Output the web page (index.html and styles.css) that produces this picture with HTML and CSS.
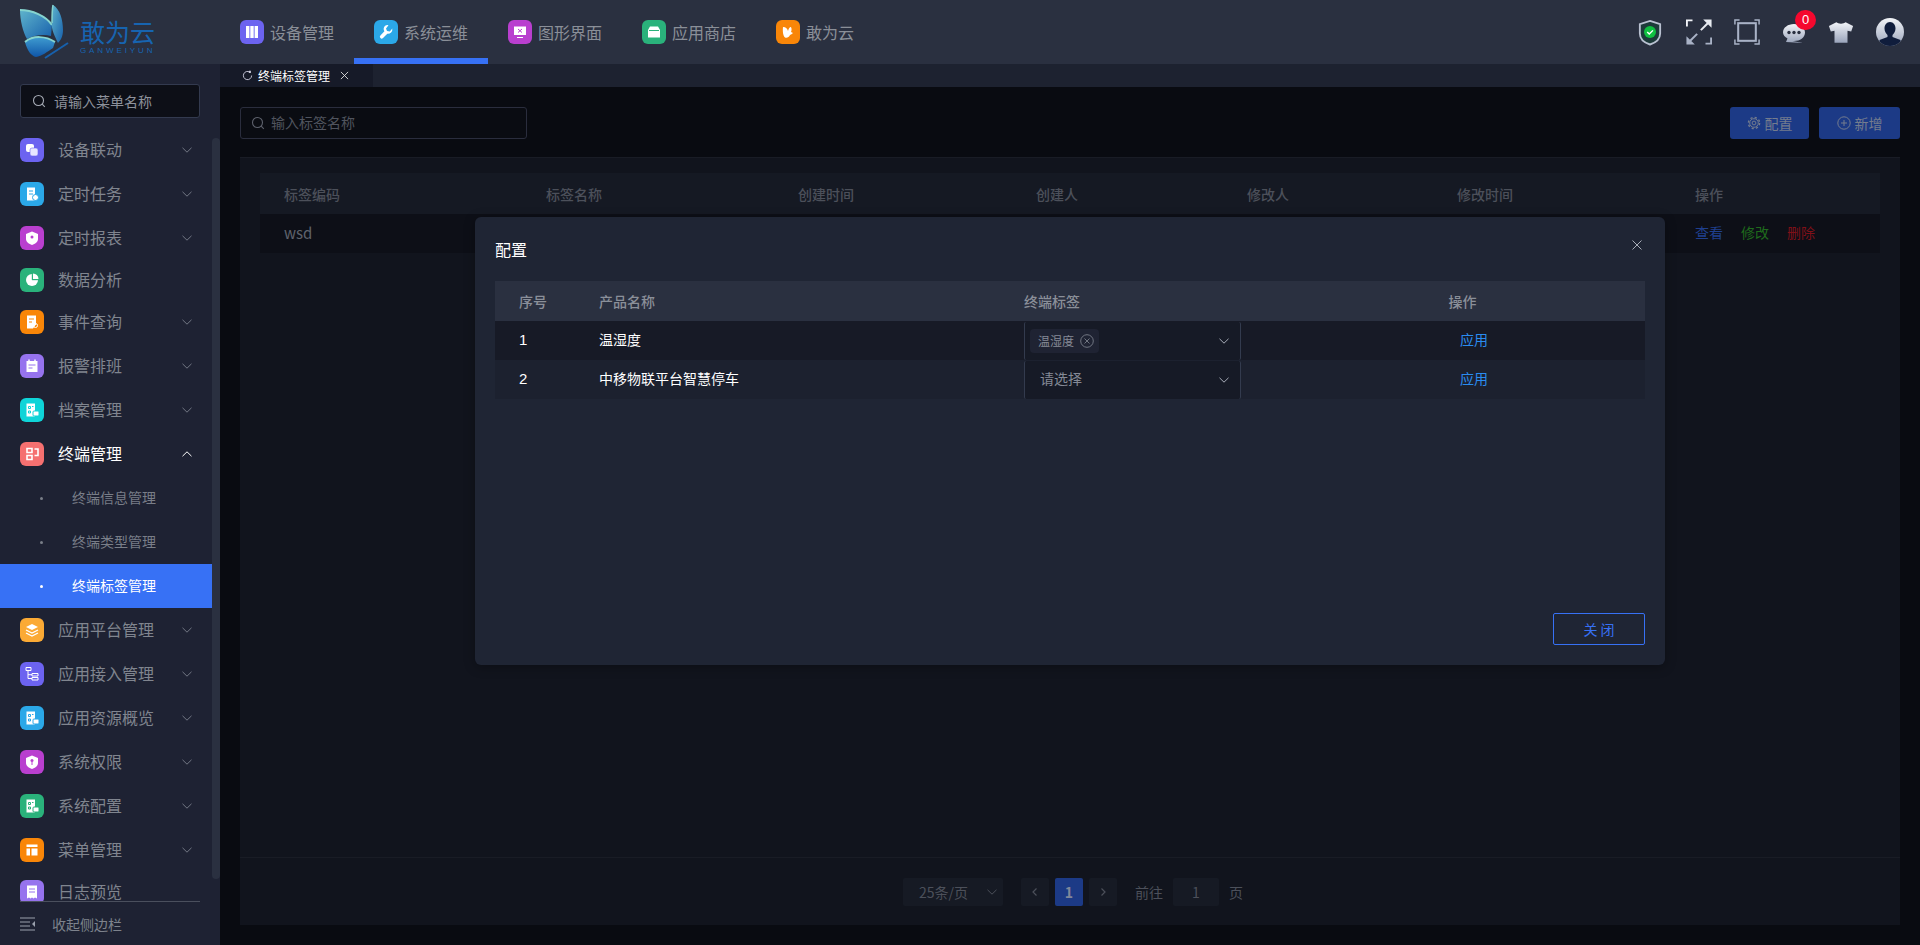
FILE: index.html
```html
<!DOCTYPE html>
<html lang="zh-CN">
<head>
<meta charset="utf-8">
<title>终端标签管理</title>
<link rel="stylesheet" href="styles.css">
</head>
<body>
<svg class="defs" width="0" height="0" aria-hidden="true">
  <defs>
    <symbol id="chev" viewBox="0 0 12 12"><path d="M1.500 3.800 6 8.200l4.500-4.400" fill="none" stroke="currentColor" stroke-width="1"/></symbol>
    <symbol id="search" viewBox="0 0 14 14"><circle cx="6.500" cy="6.500" r="5" fill="none" stroke="currentColor" stroke-width="1.100"/><path d="m10.200 10.200 2.600 2.600" stroke="currentColor" stroke-width="1.100"/></symbol>
    <linearGradient id="metal" x1="0" y1="0" x2="0" y2="1"><stop offset="0" stop-color="#f2f4f8"/><stop offset="1" stop-color="#9aa4bb"/></linearGradient>
    <linearGradient id="wing" x1="0" y1="0" x2="1" y2="1"><stop offset="0" stop-color="#5fb4cc"/><stop offset="1" stop-color="#1760ac"/></linearGradient>
    <linearGradient id="wing2" x1="0" y1="0" x2="0" y2="1"><stop offset="0" stop-color="#3f9bd0"/><stop offset="1" stop-color="#0f56a8"/></linearGradient>
  </defs>
</svg>
<header class="topbar">
  <div class="logo">
    <svg class="logo-mark" viewBox="20 2 52 60" width="52" height="60">
      <path d="M20 10C32 10 46 16 52 25L51 36C44 34 34 35 27 39 23 32 20 20 20 10z" fill="url(#wing)"/>
      <path d="M20 10C32 10 46 16 52 25" fill="none" stroke="#86d4cf" stroke-width="2"/>
      <path d="M53 5C60 9 63 20 63 30 63 36 61 40 58 43 55 36 51 30 52 23 52 16 52 10 53 5z" fill="url(#wing)"/>
      <path d="M53 5C52 10 52 16 52 23" fill="none" stroke="#86d4cf" stroke-width="1.500"/>
      <path d="M25 42C33 35 46 36 55 42L53 48C47 52 42 56 36 57 31 56 27 50 25 42z" fill="url(#wing2)"/>
      <path d="M25 42C33 35 46 36 55 42" fill="none" stroke="#86d4cf" stroke-width="2"/>
      <path d="M45 58 68 43" stroke="#1760ac" stroke-width="2" fill="none"/>
    </svg>
    <div class="logo-text"><span class="logo-cn">敢为云</span><span class="logo-en">GANWEIYUN</span></div>
  </div>
  <nav class="topnav">
    <a class="topnav-item"><span class="ico ico-top c-indigo"><svg viewBox="0 0 16 16"><path d="M2 2h3.400v12H2zM6.300 2h3.400v12H6.300zM10.600 2H14v12h-3.400z" fill="#fff"/></svg></span>设备管理</a>
    <a class="topnav-item active"><span class="ico ico-top c-sky"><svg viewBox="0 0 16 16"><path d="M7.500 1.500a4.500 4.500 0 0 1 3-.2L8 4.500l1 2.500 2.800.6 2.500-3a4.500 4.500 0 0 1-5 5.200L5 14a1.800 1.800 0 0 1-2.600-2.500l4-4.200a4.500 4.500 0 0 1 1.100-5.800z" fill="#fff"/></svg></span>系统运维</a>
    <a class="topnav-item"><span class="ico ico-top c-purple"><svg viewBox="0 0 16 16"><path d="M2 2.500h12v8.500H2z" fill="#fff"/><path d="M5 13h6v1H5z" fill="#fff"/><path d="M6 5l4 3.500M10 5 6 8.500" stroke="#b93fcf"/></svg></span>图形界面</a>
    <a class="topnav-item"><span class="ico ico-top c-green"><svg viewBox="0 0 16 16"><path d="M4 2.500h8L14 6v7.500H2V6z" fill="#fff"/><path d="M3 6.500h10" stroke="#2ab27b"/></svg></span>应用商店</a>
    <a class="topnav-item"><span class="ico ico-top c-orange"><svg viewBox="0 0 16 16"><path d="M3 3c3 0 4.500 2 5 4 .5-2 1.500-4 3-4 1 2 .5 4 0 5l2 1c-1 1-2 1.500-3 2-1 2.500-3 3-5 2.500C3 12 2.500 7 3 3z" fill="#fff"/></svg></span>敢为云</a>
  </nav>
  <div class="tools">
    <svg class="tool tool-shield" viewBox="0 0 26 28" width="24" height="27"><path d="M13 1.500 24 5v10c0 6-5 10-11 12C7 25 2 21 2 15V5z" fill="#1d3a3a" stroke="#b9c1d1" stroke-width="2"/><circle cx="13" cy="13.500" r="6.500" fill="#0fc040"/><path d="m10 13.500 2.200 2.200 4-4" fill="none" stroke="#fff" stroke-width="1.500"/></svg>
    <svg class="tool" viewBox="0 0 28 28" width="26" height="26"><path d="M1 8V1.500h6" fill="none" stroke="#f2f4f8" stroke-width="2"/><path d="M27 20v6.500h-6" fill="none" stroke="#a9b2c6" stroke-width="2"/><path d="M16 12 24 4" stroke="#e8ebf1" stroke-width="2.200"/><path d="M27.500.5v9l-9-9z" fill="#e8ebf1"/><path d="M12 16 4 24" stroke="#a9b2c6" stroke-width="2.200"/><path d="M.5 27.500v-9l9 9z" fill="#a9b2c6"/></svg>
    <svg class="tool" viewBox="0 0 28 28" width="26" height="26"><g fill="none" stroke="#a9b2c6"><rect x="4.500" y="4.500" width="19" height="19" stroke-width="2.200"/><path d="M1 6V1h5M22 1h5v5M1 22v5h5M22 27h5v-5" stroke-width="1.600"/></g></svg>
    <span class="chat">
      <svg viewBox="0 0 24 24" width="24" height="24"><path d="M12 3c6 0 11 3.500 11 8.500S18 20 12 20c-1 0-2 0-3-.3L21 22 4 21l1.500-3.500C3 16 1 14 1 11.500 1 6.500 6 3 12 3z" fill="url(#metal)"/><circle cx="7" cy="11.500" r="1.700" fill="#2a3040"/><circle cx="12" cy="11.500" r="1.700" fill="#2a3040"/><circle cx="17" cy="11.500" r="1.700" fill="#2a3040"/></svg>
      <b class="badge">0</b>
    </span>
    <svg class="tool" viewBox="0 0 28 24" width="26" height="23"><path d="M9 1c2 2 8 2 10 0l8 4-2 6-4-1v13H7V10l-4 1-2-6z" fill="url(#metal)"/></svg>
    <svg class="tool avatar" viewBox="0 0 28 28" width="28" height="28"><defs><clipPath id="av"><circle cx="14" cy="14" r="14"/></clipPath></defs><g clip-path="url(#av)"><rect width="28" height="28" fill="url(#metal)"/><path d="M14 4c3.500 0 5.500 3 5.500 6.500 0 3-1.500 5-3 6.500v2l8 3v6H3.500v-6l8-3v-2c-1.500-1.500-3-3.500-3-6.500C8.500 7 10.500 4 14 4z" fill="#101d3c"/></g></svg>
  </div>
</header>

<div class="body">
  <aside class="sidebar">
    <div class="side-search"><svg class="s-ico"><use href="#search"/></svg><span>请输入菜单名称</span></div>
    <div class="side-scroll">
      <ul class="menu">
        <li class="menu-item"><span class="ico c-indigo"><svg viewBox="0 0 16 16"><rect x="2" y="2" width="8" height="8" rx="2" fill="#fff"/><rect x="6" y="6" width="8" height="8" rx="2" fill="#e8e6ff" stroke="#6c63f0" stroke-width=".6"/></svg></span><span class="label">设备联动</span><svg class="chev"><use href="#chev"/></svg></li>
        <li class="menu-item"><span class="ico c-sky"><svg viewBox="0 0 16 16"><path d="M3 1.500h8v13H3z" fill="#fff"/><path d="M5 5h4M5 8h4" stroke="#2ba8e8"/><circle cx="11.500" cy="11.500" r="3" fill="#fff" stroke="#2ba8e8"/></svg></span><span class="label">定时任务</span><svg class="chev"><use href="#chev"/></svg></li>
        <li class="menu-item"><span class="ico c-purple"><svg viewBox="0 0 16 16"><path d="M8 1.500 14 4v5c0 3-3 5-6 6-3-1-6-3-6-6V4z" fill="#fff"/><circle cx="8" cy="7" r="1.500" fill="#b93fcf"/></svg></span><span class="label">定时报表</span><svg class="chev"><use href="#chev"/></svg></li>
        <li class="menu-item short"><span class="ico c-green"><svg viewBox="0 0 16 16"><circle cx="8" cy="8" r="6" fill="#fff"/><path d="M8 2v6h6A6 6 0 0 0 8 2z" fill="#2ab27b" stroke="#2ab27b" stroke-width=".4"/><path d="M9 1.500A5.500 5.500 0 0 1 14.500 7H9z" fill="#fff"/></svg></span><span class="label">数据分析</span></li>
        <li class="menu-item"><span class="ico c-orange"><svg viewBox="0 0 16 16"><path d="M3 1.500h9v9l-3 4H3z" fill="#fff"/><path d="M5 5h5M5 8h3" stroke="#f98608"/><circle cx="11.500" cy="11.500" r="2" fill="none" stroke="#fff"/></svg></span><span class="label">事件查询</span><svg class="chev"><use href="#chev"/></svg></li>
        <li class="menu-item"><span class="ico c-violet"><svg viewBox="0 0 16 16"><path d="M2.500 3h11v11h-11z" fill="#fff"/><path d="M5 1.500v3M11 1.500v3" stroke="#fff" stroke-width="1.500"/><path d="M4.500 7h7M4.500 10h4" stroke="#9673ee"/></svg></span><span class="label">报警排班</span><svg class="chev"><use href="#chev"/></svg></li>
        <li class="menu-item"><span class="ico c-cyan"><svg viewBox="0 0 16 16"><path d="M2.500 1.500h8.500v13H2.500z" fill="#fff"/><path d="M4.500 4.500h2v2h-2zM8 4.500h1.500M4.500 9h2v2h-2z" stroke="#0fd4d8" fill="none"/><rect x="9" y="9" width="6" height="5" rx="1" fill="#fff" stroke="#0fd4d8"/></svg></span><span class="label">档案管理</span><svg class="chev"><use href="#chev"/></svg></li>
        <li class="menu-item open"><span class="ico c-coral"><svg viewBox="0 0 16 16"><path d="M3 2.500h5v4H3zM3 9.500h5v4H3z" fill="none" stroke="#fff" stroke-width="1.600"/><path d="M10.500 3H14v6.500h-3.500" fill="none" stroke="#fff" stroke-width="1.600"/></svg></span><span class="label">终端管理</span><svg class="chev up"><use href="#chev"/></svg></li>
        <li class="sub-item"><i class="dot"></i><span class="sub-label">终端信息管理</span></li>
        <li class="sub-item"><i class="dot"></i><span class="sub-label">终端类型管理</span></li>
        <li class="sub-item current"><i class="dot"></i><span class="sub-label">终端标签管理</span></li>
        <li class="menu-item"><span class="ico c-amber"><svg viewBox="0 0 16 16"><path d="M8 2 14 5 8 8 2 5z" fill="#fff"/><path d="M2 8l6 3 6-3M2 11l6 3 6-3" fill="none" stroke="#fff" stroke-width="1.300"/></svg></span><span class="label">应用平台管理</span><svg class="chev"><use href="#chev"/></svg></li>
        <li class="menu-item"><span class="ico c-indigo"><svg viewBox="0 0 16 16"><path d="M2 1.500h5v3H2zM8 7.500h6V10H8zM8 11.500h6V14H8z" fill="none" stroke="#fff"/><path d="M4 4.500v8h4M4 8.700h4" fill="none" stroke="#fff"/></svg></span><span class="label">应用接入管理</span><svg class="chev"><use href="#chev"/></svg></li>
        <li class="menu-item"><span class="ico c-sky"><svg viewBox="0 0 16 16"><path d="M2.500 1.500h8.500v13H2.500z" fill="#fff"/><path d="M4.500 4.500h2v2h-2zM8 4.500h1.500M4.500 9h2v2h-2z" stroke="#2ba8e8" fill="none"/><rect x="9" y="9" width="6" height="5" rx="1" fill="#fff" stroke="#2ba8e8"/></svg></span><span class="label">应用资源概览</span><svg class="chev"><use href="#chev"/></svg></li>
        <li class="menu-item"><span class="ico c-purple"><svg viewBox="0 0 16 16"><path d="M8 1.500 14 4v5c0 3-3 5-6 6-3-1-6-3-6-6V4z" fill="#fff"/><circle cx="8" cy="6.500" r="1.500" fill="#b93fcf"/><path d="M8 8v3" stroke="#b93fcf"/></svg></span><span class="label">系统权限</span><svg class="chev"><use href="#chev"/></svg></li>
        <li class="menu-item"><span class="ico c-green"><svg viewBox="0 0 16 16"><path d="M2.500 1.500h8.500v13H2.500z" fill="#fff"/><path d="M4.500 4.500h2v2h-2zM8 4.500h1.500M4.500 9h2v2h-2z" stroke="#2ab27b" fill="none"/><rect x="9" y="9" width="6" height="5" rx="1" fill="#fff" stroke="#2ab27b"/></svg></span><span class="label">系统配置</span><svg class="chev"><use href="#chev"/></svg></li>
        <li class="menu-item"><span class="ico c-orange"><svg viewBox="0 0 16 16"><path d="M2.500 2.500h11V5h-11zM2.500 6.500h3.500v7h-3.500zM7.500 6.500h6v7h-6z" fill="#fff"/></svg></span><span class="label">菜单管理</span><svg class="chev"><use href="#chev"/></svg></li>
        <li class="menu-item short"><span class="ico c-violet"><svg viewBox="0 0 16 16"><path d="M3 1.500h10v13l-2-1-1.500 1-1.500-1-1.500 1-1.500-1-2 1z" fill="#fff"/><path d="M5 5h6M5 8h6" stroke="#9673ee"/></svg></span><span class="label">日志预览</span></li>
      </ul>
      <div class="scrollbar"></div>
    </div>
    <div class="side-foot">
      <svg class="collapse" viewBox="0 0 16 14" width="16" height="14"><path d="M0 1h15M0 5h10M0 9h10M0 13h15" stroke="#9aa0ad" stroke-width="1"/><path d="M15 4v6l-3-3z" fill="#9aa0ad"/></svg>
      <span>收起侧边栏</span>
    </div>
  </aside>

  <main class="main">
    <div class="tabs">
      <div class="tab">
        <svg class="tab-ico" viewBox="0 0 12 12" width="11" height="11"><path d="M10.500 6A4.500 4.500 0 1 1 8.500 2.300" fill="none" stroke="currentColor"/><path d="M7.700.8h2v2.400h-2.300z" fill="currentColor"/></svg>
        <span>终端标签管理</span>
        <svg class="tab-close" viewBox="0 0 10 10" width="9" height="9"><path d="M1 1l8 8M9 1 1 9" stroke="currentColor"/></svg>
      </div>
    </div>
    <div class="page">
      <div class="toolbar">
        <div class="search-box"><svg class="s-ico"><use href="#search"/></svg><span>输入标签名称</span></div>
        <div class="btns">
          <button class="btn"><svg viewBox="0 0 14 14" width="14" height="14"><circle cx="7" cy="7" r="1.900" fill="none" stroke="currentColor"/><circle cx="7" cy="7" r="4.300" fill="none" stroke="currentColor"/><circle cx="7" cy="7" r="5.600" fill="none" stroke="currentColor" stroke-width="1.400" stroke-dasharray="2.200 2.200"/></svg>配置</button>
          <button class="btn wide"><svg viewBox="0 0 14 14" width="14" height="14"><circle cx="7" cy="7" r="6.200" fill="none" stroke="currentColor"/><path d="M4 7h6M7 4v6" stroke="currentColor"/></svg>新增</button>
        </div>
      </div>
      <div class="panel">
        <table class="list">
          <colgroup><col class="w1"><col class="w2"><col class="w3"><col class="w4"><col class="w5"><col class="w6"><col></colgroup>
          <thead><tr><th>标签编码</th><th>标签名称</th><th>创建时间</th><th>创建人</th><th>修改人</th><th>修改时间</th><th>操作</th></tr></thead>
          <tbody><tr><td>wsd</td><td></td><td></td><td></td><td></td><td></td><td class="ops"><a class="op-blue">查看</a><a class="op-green">修改</a><a class="op-red">删除</a></td></tr></tbody>
        </table>
        <div class="pager">
          <span class="pg pg-size">25条/页<svg class="chev"><use href="#chev"/></svg></span>
          <span class="pg pg-btn"><svg viewBox="0 0 10 10" width="10" height="10"><path d="M6.500 1.500 3 5l3.500 3.500" fill="none" stroke="currentColor" stroke-width="1.200"/></svg></span>
          <span class="pg pg-cur">1</span>
          <span class="pg pg-btn"><svg viewBox="0 0 10 10" width="10" height="10"><path d="M3.500 1.500 7 5 3.500 8.500" fill="none" stroke="currentColor" stroke-width="1.200"/></svg></span>
          <span class="pg-txt pg-go">前往</span>
          <span class="pg pg-input">1</span>
          <span class="pg-txt">页</span>
        </div>
      </div>
    </div>
  </main>
</div>

<section class="dialog">
  <div class="dlg-head"><h2>配置</h2><svg class="dlg-x" viewBox="0 0 10 10" width="10" height="10"><path d="M.5.500l9 9M9.500.500l-9 9" stroke="#a8adb8"/></svg></div>
  <table class="cfg">
    <colgroup><col class="c1"><col class="c2"><col class="c3"><col class="c4"></colgroup>
    <thead><tr><th>序号</th><th>产品名称</th><th class="th-sel">终端标签</th><th class="th-op">操作</th></tr></thead>
    <tbody>
      <tr><td>1</td><td class="name">温湿度</td><td class="cell-sel"><div class="select"><span class="tag">温湿度<svg viewBox="0 0 14 14" width="14" height="14"><circle cx="7" cy="7" r="6.300" fill="none" stroke="currentColor" stroke-width=".8"/><path d="m4.500 4.500 5 5M9.500 4.500l-5 5" stroke="currentColor" stroke-width=".8"/></svg></span><svg class="chev"><use href="#chev"/></svg></div></td><td class="td-op"><a class="apply">应用</a></td></tr>
      <tr><td>2</td><td class="name">中移物联平台智慧停车</td><td class="cell-sel"><div class="select"><span class="ph">请选择</span><svg class="chev"><use href="#chev"/></svg></div></td><td class="td-op"><a class="apply">应用</a></td></tr>
    </tbody>
  </table>
  <div class="dlg-foot"><button class="close-btn">关 闭</button></div>
</section>
</body>
</html>
```
FILE: styles.css
```css
* { box-sizing: border-box; }
html, body { margin: 0; height: 100%; overflow: hidden; }
body {
  position: relative;
  display: flex;
  flex-direction: column;
  height: 945px;
  background: #0e1119;
  color: #8a8f9a;
  font: 14px "Noto Sans CJK SC", "Noto Sans", sans-serif;
}
.defs { position: absolute; }
ul { list-style: none; margin: 0; padding: 0; }
table { border-collapse: collapse; table-layout: fixed; width: 100%; }
button { font: inherit; border: 0; }
th { font-weight: 500; text-align: left; }

/* top bar */
.topbar { flex: none; height: 64px; display: flex; align-items: stretch; background: #2a3040; }
.logo { width: 220px; padding-left: 20px; display: flex; align-items: flex-start; gap: 8px; }
.logo-mark { flex: none; margin-top: 2px; display: block; }
.logo-text { display: flex; flex-direction: column; padding-top: 20px; color: #1764b0; }
.logo-cn { font: 25px/26px "Liberation Sans", "Noto Sans CJK SC", sans-serif; white-space: nowrap; }
.logo-en { font: 8px/10px "Liberation Sans", sans-serif; letter-spacing: 2.900px; white-space: nowrap; }
.topnav { display: flex; }
.topnav-item { width: 134px; display: flex; align-items: center; gap: 6px; padding: 6px 0 0 20px; font-size: 16px; color: #8a8f98; border-bottom: 6px solid transparent; }
.topnav-item.active { border-bottom-color: #3771f5; }
.tools { margin-left: auto; padding-right: 16px; display: flex; align-items: center; gap: 22px; }
.tool { display: block; }
.tool-shield { margin-right: 2px; }
.chat { position: relative; display: block; width: 24px; height: 24px; margin-top: 2px; }
.chat svg { display: block; }
.badge { position: absolute; left: 13px; top: -11px; width: 21px; height: 20px; border-radius: 10px; background: #f5082e; color: #fff; font: 400 13px/20px "Liberation Sans", sans-serif; text-align: center; }

/* icon tiles */
.ico { flex: none; display: flex; align-items: center; justify-content: center; width: 24px; height: 24px; border-radius: 6px; }
.ico svg { width: 16px; height: 16px; display: block; }
.ico-top svg { width: 16px; height: 16px; }
.c-indigo { background: #6c63f0; }
.c-sky { background: #2ba8e8; }
.c-purple { background: #b93fcf; }
.c-green { background: #2ab27b; }
.c-orange { background: #f98608; }
.c-violet { background: #9673ee; }
.c-cyan { background: #0fd4d8; }
.c-coral { background: #f57070; }
.c-amber { background: #fbaa35; }

/* body + sidebar */
.body { flex: 1; min-height: 0; display: flex; }
.sidebar { flex: none; width: 220px; background: #1e2233; display: flex; flex-direction: column; position: relative; }
.side-search { flex: none; margin: 20px 0 0 20px; width: 180px; height: 34px; padding-left: 11px; display: flex; align-items: center; gap: 8px; border: 1px solid #333a4f; border-radius: 3px; background: #0d0f17; font-size: 14px; color: #8d929c; }
.s-ico { flex: none; width: 14px; height: 14px; color: #a6abb5; }
.side-scroll { flex: 1; min-height: 0; overflow: hidden; position: relative; margin-top: 10px; }
.menu { width: 212px; }
.menu-item { height: 44px; display: flex; align-items: center; padding: 0 20px; color: #80858f; font-size: 16px; }
.menu-item.short { height: 40px; }
.label { margin-left: 14px; padding-bottom: 2px; flex: 1; white-space: nowrap; }
.chev { flex: none; width: 12px; height: 12px; color: #727784; margin-right: -1px; }
.chev.up { transform: rotate(180deg); color: #fff; }
.menu-item.open { color: #fff; }
.sub-item { height: 44px; display: flex; align-items: center; padding-left: 40px; font-size: 14px; color: #797e88; }
.sub-label { padding-bottom: 2px; }
.dot { width: 3px; height: 3px; border-radius: 50%; background: currentColor; margin-right: 29px; }
.sub-item.current { background: #3771f5; color: #fff; }
.scrollbar { position: absolute; left: 212px; top: 10px; width: 8px; height: 741px; background: #2a3040; border-radius: 4px; }
.side-foot { flex: none; height: 44px; margin: 0 20px; display: flex; align-items: center; gap: 16px; border-top: 1px solid #4a4f5d; font-size: 14px; color: #7d828c; }
.collapse { display: block; }

/* main */
.main { flex: 1; min-width: 0; display: flex; flex-direction: column; background: #090b11; }
.tabs { flex: none; height: 23px; background: #1d2230; display: flex; }
.tab { width: 153px; display: flex; align-items: center; gap: 5px; padding-left: 22px; background: #161a28; font-size: 12px; color: #fff; }
.tab-close { margin-left: 5px; color: #ddd; }
.tab-ico { color: #ccd; }
.page { flex: 1; min-height: 0; padding: 20px; display: flex; flex-direction: column; }
.toolbar { flex: none; height: 32px; display: flex; justify-content: space-between; }
.search-box { width: 287px; height: 32px; border: 1px solid #2a2d3d; border-radius: 3px; display: flex; align-items: center; padding: 0 0 2px 10px; gap: 6px; background: #0a0c12; font-size: 14px; color: #50545e; }
.search-box .s-ico { color: #5d616c; margin-top: 2px; }
.btns { display: flex; gap: 10px; }
.btn { height: 32px; width: 79px; display: flex; align-items: center; justify-content: center; gap: 4px; border-radius: 3px; background: #1c3a86; color: #747c8e; font-size: 14px; }
.btn.wide { width: 81px; }
.panel { flex: 1; min-height: 0; margin-top: 18px; padding: 15px 20px 0; background: #11141d; border-top: 1px solid #191c25; display: flex; flex-direction: column; }
.list { flex: none; }
.list th { height: 41px; padding-left: 24px; font-size: 14px; color: #4c505a; background: #151923; }
.list td { height: 39px; padding: 0 0 3px 24px; font-size: 15px; color: #5f636d; background: #0d0f17; vertical-align: middle; }
.w1 { width: 262px; } .w2 { width: 252px; } .w3 { width: 238px; } .w4 { width: 211px; } .w5 { width: 210px; } .w6 { width: 238px; }
.list td.ops { font-size: 14px; white-space: nowrap; }
.ops a { margin-right: 18px; }
.op-blue { color: #1f3f8e; } .op-green { color: #1f6b1c; } .op-red { color: #7f1018; }
.pager { margin: auto -20px 0; padding-left: 6px; height: 68px; flex: none; border-top: 1px solid #191c25; display: flex; align-items: center; justify-content: center; font-size: 14px; color: #4c505a; }
.pg { display: flex; align-items: center; justify-content: center; height: 28px; border-radius: 2px; background: #161a24; color: #4c505a; }
.pg-size { width: 100px; gap: 18px; margin-right: 18px; padding-left: 10px; }
.pg-size .chev { color: #4c505a; }
.pg-btn { width: 28px; }
.pg-cur { width: 28px; margin: 0 6px; background: #1c3a86; color: #80879a; font-weight: 700; }
.pg-go { margin-left: 18px; }
.pg-input { width: 46px; margin: 0 10px; }

/* modal */
.dialog { position: absolute; left: 475px; top: 217px; width: 1190px; height: 448px; background: #1f2534; border-radius: 6px; padding: 0 20px; box-shadow: 0 2px 12px rgba(0, 0, 0, .3); display: flex; flex-direction: column; }
.dlg-head { flex: none; height: 64px; display: flex; align-items: center; justify-content: space-between; padding-right: 3px; }
.dlg-head h2 { margin: 0; font-size: 16px; font-weight: 400; color: #fff; }
.dlg-x { margin-bottom: 9px; }
.cfg { flex: none; }
.cfg th { height: 40px; padding-left: 24px; font-size: 14px; color: #8a8f99; background: #2a3040; }
.cfg td { height: 39px; padding: 0 0 3px 24px; color: #fff; font-size: 14px; background: #1c212f; vertical-align: middle; }
.cfg tbody tr:first-child td { background: #171a26; }
.cfg td:first-child { font-family: "Liberation Sans", sans-serif; font-size: 15px; }
.cfg .th-sel { padding-left: 0; }
.cfg .th-op { padding-left: 40px; text-align: center; }
.cfg .td-op { padding-left: 62px; text-align: center; }
.cfg .cell-sel { padding: 0; }
.c1 { width: 80px; } .c2 { width: 449px; } .c3 { width: 217px; } .c4 { width: auto; }
.select { width: 217px; height: 38px; display: flex; align-items: center; justify-content: space-between; padding: 0 10px 0 5px; border-left: 1px solid #333b4e; border-right: 1px solid #333b4e; border-radius: 2px; background: #161a26; }
.select .chev { color: #a8adb9; margin: 0; }
.tag { display: flex; align-items: center; gap: 6px; height: 24px; padding: 0 5px 0 8px; border-radius: 4px; background: #1f2333; font-size: 12px; color: #858a96; }
.ph { padding: 0 0 3px 10px; color: #858a96; font-size: 14px; }
.apply { color: #2a8cf0; font-size: 14px; }
.dlg-foot { margin-top: auto; height: 52px; flex: none; display: flex; justify-content: flex-end; align-items: flex-start; }
.close-btn { width: 92px; height: 32px; background: transparent; border: 1px solid #3771f5; border-radius: 2px; color: #3771f5; font-size: 14px; }
```
